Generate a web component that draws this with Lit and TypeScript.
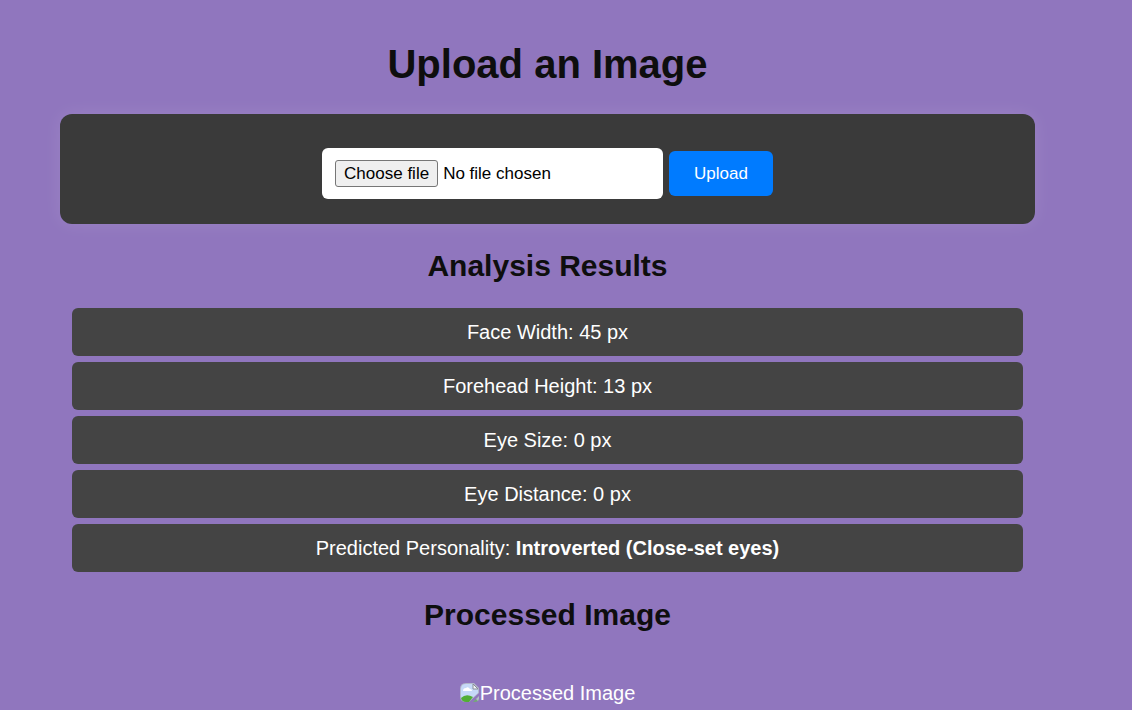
import { LitElement, html, css } from "lit";
import { customElement, state } from "lit/decorators.js";

interface Measurement {
  label: string;
  value: string;
  strong?: boolean;
}

@customElement("app-root")
export class AppRoot extends LitElement {
  static styles = css`
    :host {
      display: block;
      box-sizing: border-box;
      min-height: 100vh;
      padding: 38px 97px 0 60px;
      background: #9076be;
      color: #fff;
      font: 20px/24px "Liberation Sans", Arial, sans-serif;
      text-align: center;
    }
    h1,
    h2 {
      margin: 0;
      color: #0e0e0e;
      font-weight: bold;
    }
    h1 {
      font-size: 40px;
      line-height: 52px;
    }
    h2 {
      font-size: 30px;
      line-height: 36px;
    }
    .upload {
      display: flex;
      align-items: center;
      justify-content: center;
      gap: 6px;
      margin: 24px 0;
      padding: 34px 24px 25px;
      border-radius: 12px;
      background: #3a3a3a;
      box-shadow: 0 0 18px rgba(255, 255, 255, 0.1);
      font-size: 17px;
      line-height: 21px;
    }
    .picker {
      position: relative;
      display: flex;
      align-items: center;
      gap: 5px;
      box-sizing: border-box;
      width: 341px;
      padding: 12px 13px;
      border-radius: 6px;
      background: #fff;
      color: #000;
      cursor: pointer;
    }
    .file {
      position: absolute;
      inset: 0;
      width: 100%;
      opacity: 0;
      cursor: pointer;
    }
    .choose {
      padding: 2px 8px;
      border: 1px solid #767676;
      border-radius: 3px;
      background: #efefef;
    }
    .submit {
      padding: 12px 25px;
      border: 0;
      border-radius: 6px;
      background: #007bff;
      color: #fff;
      font: inherit;
      cursor: pointer;
    }
    .results {
      display: grid;
      gap: 6px;
      margin: 24px 12px 25px;
      padding: 0;
      list-style: none;
    }
    .result {
      padding: 12px;
      border-radius: 6px;
      background: #444;
    }
    .processed {
      display: flex;
      align-items: center;
      justify-content: center;
      margin-top: 48px;
    }
    .broken {
      width: 20px;
      height: 20px;
    }
  `;

  @state() private fileName = "No file chosen";

  private results: Measurement[] = [
    { label: "Face Width", value: "45 px" },
    { label: "Forehead Height", value: "13 px" },
    { label: "Eye Size", value: "0 px" },
    { label: "Eye Distance", value: "0 px" },
    { label: "Predicted Personality", value: "Introverted (Close-set eyes)", strong: true },
  ];

  private pick(event: Event) {
    const input = event.target as HTMLInputElement;
    this.fileName = input.files?.[0]?.name ?? "No file chosen";
  }

  render() {
    return html`
      <h1>Upload an Image</h1>
      <form class="upload" @submit=${(e: Event) => e.preventDefault()}>
        <label class="picker">
          <input class="file" type="file" accept="image/*" @change=${this.pick} />
          <span class="choose">Choose file</span>
          <span>${this.fileName}</span>
        </label>
        <button class="submit" type="submit">Upload</button>
      </form>
      <h2>Analysis Results</h2>
      <ul class="results">
        ${this.results.map(
          (r) => html`<li class="result">${r.label}: ${r.strong ? html`<strong>${r.value}</strong>` : r.value}</li>`
        )}
      </ul>
      <h2>Processed Image</h2>
      <div class="processed">
        <svg class="broken" viewBox="0 0 20 20" aria-hidden="true">
          <path d="M6 0H14L19 5V10L9 19H6Q0 19 0 13V6Q0 0 6 0Z" fill="#b3b9cb" />
          <path d="M6 1H13L18 6V10L9 18H6Q1 18 1 13V6Q1 1 6 1Z" fill="#c6d9f8" />
          <path d="M3 8Q3 5 6 5Q8 3 10 6Q12 6 12 8Z" fill="#fff" />
          <path d="M1 15Q6 10 13 14L9 19H6Q2 19 1 15Z" fill="#52ae35" />
          <path d="M13 1V6H18Z" fill="#f5f7fb" stroke="#898c96" />
          <path d="M13 19L19 13V16Q18 19 15 19Z" fill="#74a878" />
          <path d="M16 16L19 13V16L18 18Z" fill="#b3b9cb" />
        </svg>
        <span>Processed Image</span>
      </div>
    `;
  }
}
